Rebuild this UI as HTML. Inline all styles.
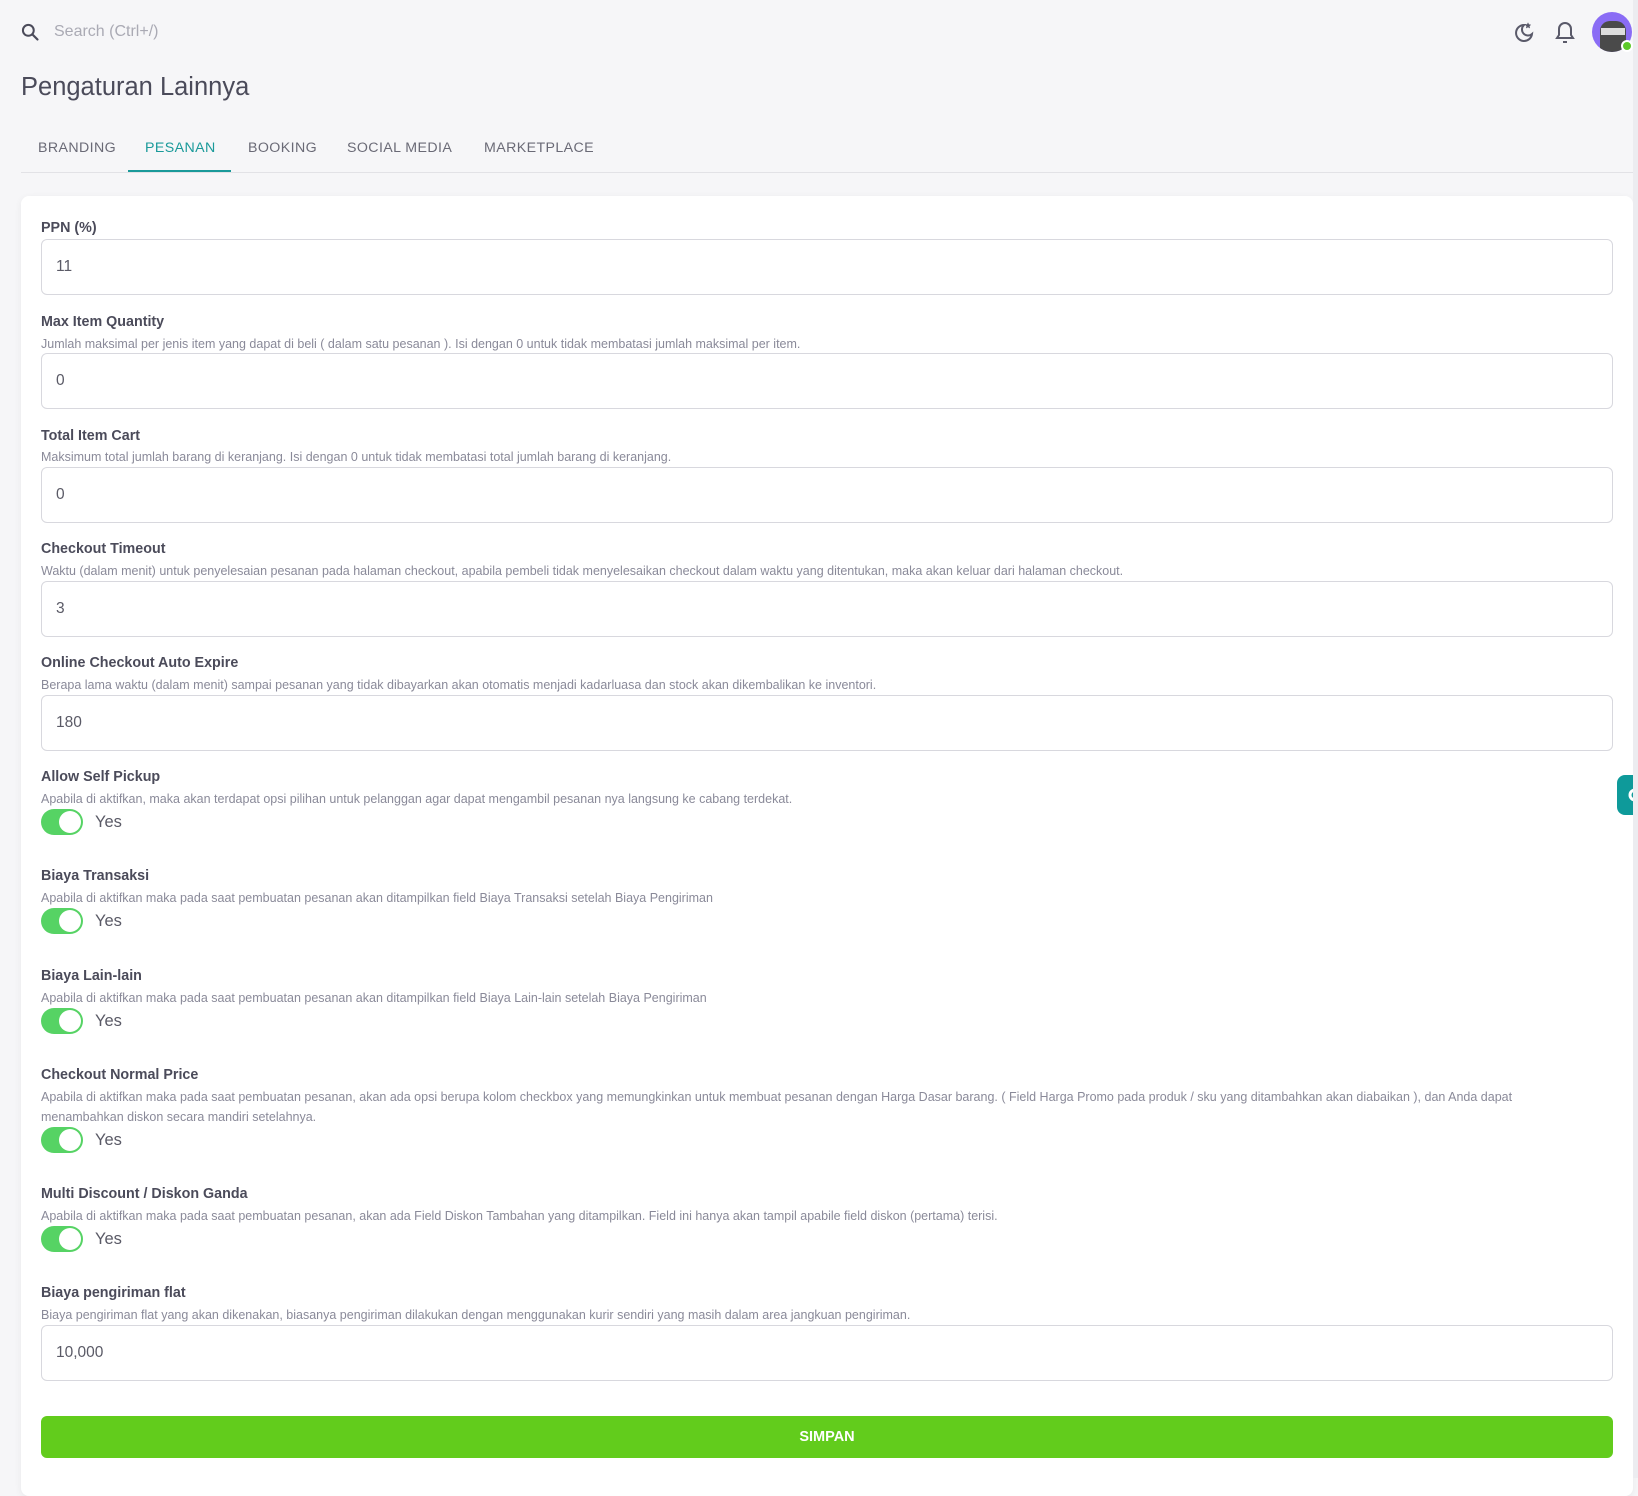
<!DOCTYPE html>
<html><head><meta charset="utf-8"><style>
*{box-sizing:border-box;margin:0;padding:0}
body{width:1638px;height:1478px;background:#f6f6f8;font-family:"Liberation Sans",sans-serif;color:#4b4b5a;position:relative;overflow:hidden}
.abs{position:absolute}
.card{position:absolute;left:21px;top:196px;width:1612px;height:1300px;background:#fff;border-radius:8px;box-shadow:0 2px 8px rgba(0,0,0,.06)}
.lbl{position:absolute;left:41px;font-size:14.3px;font-weight:bold;color:#4b4b5a;line-height:16px}
.desc{position:absolute;left:41px;font-size:12.5px;color:#8a8a99;line-height:20px}
.inp{position:absolute;left:41px;width:1572px;border:1px solid #d8d8de;border-radius:6px;font-size:15.5px;color:#5a5a66;padding-left:14px;display:flex;align-items:center}
.tog{position:absolute;left:41px;width:42px;height:26px;border-radius:13px;background:#56d364}
.tog:after{content:"";position:absolute;right:2px;top:2px;width:22px;height:22px;border-radius:50%;background:#fff}
.yes{position:absolute;left:95px;font-size:16.5px;color:#5a5a66;line-height:20px}
.tab{position:absolute;top:140px;font-size:14.2px;letter-spacing:.4px;color:#6a6a76}
</style></head><body>
<svg class="abs" style="left:20px;top:22px" width="20" height="20" viewBox="0 0 24 24"><circle cx="10" cy="10" r="6.5" fill="none" stroke="#4b4b5a" stroke-width="2.4"/><path d="M15 15l6 6" stroke="#4b4b5a" stroke-width="2.6" stroke-linecap="round"/></svg>
<div class="abs" style="left:54px;top:23px;font-size:16px;color:#aaaab4">Search (Ctrl+/)</div>
<svg class="abs" style="left:1512px;top:20px" width="24" height="24" viewBox="0 0 24 24" fill="none" stroke="#5a5a6a" stroke-width="2"><path d="M12 5a8 8 0 1 0 8 9 6 6 0 0 1-8-9z"/><path d="M16 3l.8 1.6 1.7.3-1.2 1.2.3 1.7-1.6-.8-1.6.8.3-1.7-1.2-1.2 1.7-.3z" fill="#5a5a6a" stroke-width="0.6"/></svg>
<svg class="abs" style="left:1553px;top:20px" width="24" height="26" viewBox="0 0 24 26" fill="none" stroke="#5a5a6a" stroke-width="2"><path d="M12 3a6 6 0 0 0-6 6v6l-2 3h16l-2-3V9a6 6 0 0 0-6-6z"/><path d="M10 22h4"/></svg>
<div class="abs" style="left:1592px;top:12px;width:40px;height:40px;border-radius:50%;background:#8a6cf5;overflow:hidden"><div style="position:absolute;left:8px;top:9px;width:26px;height:31px;background:#4a4a4a;border-radius:10px 10px 4px 4px"></div><div style="position:absolute;left:9px;top:16px;width:24px;height:7px;background:#ddd"></div></div>
<div class="abs" style="left:1621px;top:40px;width:12px;height:12px;border-radius:50%;background:#5cc928;border:2px solid #fff"></div>
<div class="abs" style="left:21px;top:73px;font-size:25.5px;color:#4b4b5a">Pengaturan Lainnya</div>
<div class="tab" style="left:38px">BRANDING</div>
<div class="tab" style="left:145px;color:#1a9a9a">PESANAN</div>
<div class="tab" style="left:248px">BOOKING</div>
<div class="tab" style="left:347px">SOCIAL MEDIA</div>
<div class="tab" style="left:484px">MARKETPLACE</div>
<div class="abs" style="left:21px;top:172px;width:1612px;height:1px;background:#e2e2e6"></div>
<div class="abs" style="left:128px;top:170px;width:103px;height:2px;background:#1a9a9a"></div>
<div class="card"></div>
<div class="lbl" style="top:220px">PPN (%)</div>
<div class="inp" style="top:239px;height:56px">11</div>
<div class="lbl" style="top:314px">Max Item Quantity</div>
<div class="desc" style="top:334px">Jumlah maksimal per jenis item yang dapat di beli ( dalam satu pesanan ). Isi dengan 0 untuk tidak membatasi jumlah maksimal per item.</div>
<div class="inp" style="top:353px;height:56px">0</div>
<div class="lbl" style="top:428px">Total Item Cart</div>
<div class="desc" style="top:447px">Maksimum total jumlah barang di keranjang. Isi dengan 0 untuk tidak membatasi total jumlah barang di keranjang.</div>
<div class="inp" style="top:467px;height:56px">0</div>
<div class="lbl" style="top:541px">Checkout Timeout</div>
<div class="desc" style="top:561px">Waktu (dalam menit) untuk penyelesaian pesanan pada halaman checkout, apabila pembeli tidak menyelesaikan checkout dalam waktu yang ditentukan, maka akan keluar dari halaman checkout.</div>
<div class="inp" style="top:581px;height:56px">3</div>
<div class="lbl" style="top:655px">Online Checkout Auto Expire</div>
<div class="desc" style="top:675px">Berapa lama waktu (dalam menit) sampai pesanan yang tidak dibayarkan akan otomatis menjadi kadarluasa dan stock akan dikembalikan ke inventori.</div>
<div class="inp" style="top:695px;height:56px">180</div>
<div class="lbl" style="top:769px">Allow Self Pickup</div>
<div class="desc" style="top:789px">Apabila di aktifkan, maka akan terdapat opsi pilihan untuk pelanggan agar dapat mengambil pesanan nya langsung ke cabang terdekat.</div>
<div class="tog" style="top:809px"></div><div class="yes" style="top:812px">Yes</div>
<div class="lbl" style="top:868px">Biaya Transaksi</div>
<div class="desc" style="top:888px">Apabila di aktifkan maka pada saat pembuatan pesanan akan ditampilkan field Biaya Transaksi setelah Biaya Pengiriman</div>
<div class="tog" style="top:908px"></div><div class="yes" style="top:911px">Yes</div>
<div class="lbl" style="top:968px">Biaya Lain-lain</div>
<div class="desc" style="top:988px">Apabila di aktifkan maka pada saat pembuatan pesanan akan ditampilkan field Biaya Lain-lain setelah Biaya Pengiriman</div>
<div class="tog" style="top:1008px"></div><div class="yes" style="top:1011px">Yes</div>
<div class="lbl" style="top:1067px">Checkout Normal Price</div>
<div class="desc" style="top:1087px;width:1540px">Apabila di aktifkan maka pada saat pembuatan pesanan, akan ada opsi berupa kolom checkbox yang memungkinkan untuk membuat pesanan dengan Harga Dasar barang. ( Field Harga Promo pada produk / sku yang ditambahkan akan diabaikan ), dan Anda dapat<br>menambahkan diskon secara mandiri setelahnya.</div>
<div class="tog" style="top:1127px"></div><div class="yes" style="top:1130px">Yes</div>
<div class="lbl" style="top:1186px">Multi Discount / Diskon Ganda</div>
<div class="desc" style="top:1206px">Apabila di aktifkan maka pada saat pembuatan pesanan, akan ada Field Diskon Tambahan yang ditampilkan. Field ini hanya akan tampil apabile field diskon (pertama) terisi.</div>
<div class="tog" style="top:1226px"></div><div class="yes" style="top:1229px">Yes</div>
<div class="lbl" style="top:1285px">Biaya pengiriman flat</div>
<div class="desc" style="top:1305px">Biaya pengiriman flat yang akan dikenakan, biasanya pengiriman dilakukan dengan menggunakan kurir sendiri yang masih dalam area jangkuan pengiriman.</div>
<div class="inp" style="top:1325px;height:56px">10,000</div>
<div class="abs" style="left:41px;top:1416px;width:1572px;height:42px;background:#62cc1c;border-radius:6px;color:#fff;font-weight:bold;font-size:14.5px;display:flex;align-items:center;justify-content:center">SIMPAN</div>
<div class="abs" style="left:1617px;top:775px;width:30px;height:40px;background:#0e9a9a;border-radius:8px"></div>
<svg class="abs" style="left:1626px;top:786px" width="14" height="18" viewBox="0 0 14 18"><circle cx="9" cy="9" r="5" fill="none" stroke="#fff" stroke-width="3"/></svg>
<div class="abs" style="left:1633px;top:0;width:5px;height:1478px;background:#ececf0"></div>
</body></html>
